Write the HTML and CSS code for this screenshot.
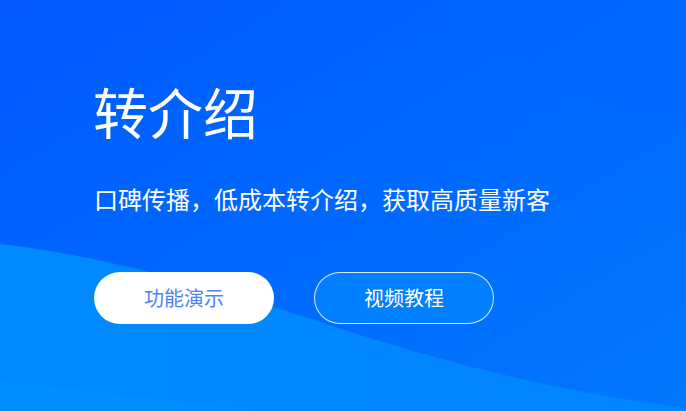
FILE: index.html
```html
<!DOCTYPE html>
<html lang="zh-CN">
<head>
<meta charset="utf-8">
<link rel="stylesheet" href="styles.css">
</head>
<body>
<section class="hero">
  <svg class="waves" viewBox="0 0 686 411" preserveAspectRatio="none" aria-hidden="true">
    <defs>
      <linearGradient id="bg" x1="0" y1="0" x2="1" y2="1">
        <stop offset="0" stop-color="#005aff"/>
        <stop offset="0.5" stop-color="#0068ff"/>
        <stop offset="1" stop-color="#0078ff"/>
      </linearGradient>
      <linearGradient id="w1" x1="0" y1="0" x2="1" y2="0">
        <stop offset="0" stop-color="#008aff"/>
        <stop offset="1" stop-color="#0086ff"/>
      </linearGradient>
    </defs>
    <rect width="686" height="411" fill="url(#bg)"/>
    <path d="M0 244 C 90 254, 200 282, 320 322 S 560 392, 686 408 L686 411 L0 411 Z" fill="url(#w1)"/>
    <path d="M430 0 C 520 60, 600 110, 686 130 L686 0 Z" fill="#0066ff" opacity="0.5"/>
    <path d="M0 380 C 120 395, 200 405, 260 411 L0 411 Z" fill="#0090ff" opacity="0.6"/>
  </svg>
  <div class="content">
    <h1 class="title">转介绍</h1>
    <p class="subtitle">口碑传播，低成本转介绍，获取高质量新客</p>
    <div class="actions">
      <a class="btn btn-primary">功能演示</a>
      <a class="btn btn-outline">视频教程</a>
    </div>
  </div>
</section>
</body>
</html>
```

FILE: styles.css
```css
html, body {
  margin: 0;
  padding: 0;
}
body {
  font-family: "Noto Sans CJK SC", "Noto Sans", sans-serif;
  width: 686px;
  height: 411px;
  overflow: hidden;
}
.hero {
  position: relative;
  width: 686px;
  height: 411px;
  overflow: hidden;
}
.waves {
  position: absolute;
  left: 0;
  top: 0;
  width: 100%;
  height: 100%;
}
.content {
  position: relative;
  padding: 75px 0 0 94px;
  display: flex;
  flex-direction: column;
}
.title {
  margin: 0 0 0 -1px;
  color: #fff;
  font-size: 55px;
  font-weight: 400;
  line-height: 70px;
}
.subtitle {
  margin: 37px 0 0;
  color: #fff;
  font-size: 24px;
  font-weight: 400;
  line-height: 34px;
}
.actions {
  display: flex;
  gap: 40px;
  margin-top: 56px;
}
.btn {
  box-sizing: border-box;
  width: 180px;
  height: 52px;
  border-radius: 26px;
  display: flex;
  align-items: center;
  justify-content: center;
  font-size: 20px;
  line-height: 1;
  text-decoration: none;
}
.btn-primary {
  background: #fff;
  color: #4d84f2;
}
.btn-outline {
  border: 1px solid rgba(255, 255, 255, 0.85);
  background: rgba(0, 140, 255, 0.6);
  color: #fff;
}
```
